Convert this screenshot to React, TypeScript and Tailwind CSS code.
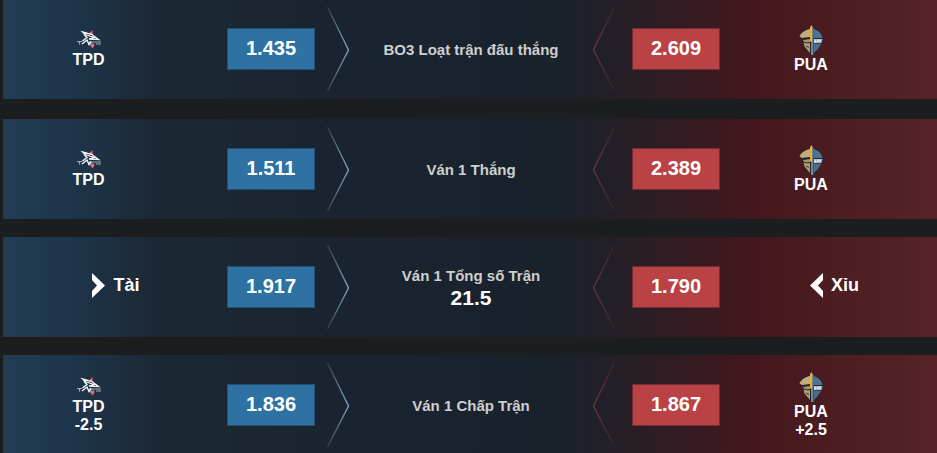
import React from "react";
import clsx from "clsx";

type Side = "home" | "away";

type Market = {
  title: string;
  line?: string;
  overUnder?: boolean;
  home: { label: string; odds: string; handicap?: string };
  away: { label: string; odds: string; handicap?: string };
};

const markets: Market[] = [
  {
    title: "BO3 Loạt trận đấu thắng",
    home: { label: "TPD", odds: "1.435" },
    away: { label: "PUA", odds: "2.609" },
  },
  {
    title: "Ván 1 Thắng",
    home: { label: "TPD", odds: "1.511" },
    away: { label: "PUA", odds: "2.389" },
  },
  {
    title: "Ván 1 Tổng số Trận",
    line: "21.5",
    overUnder: true,
    home: { label: "Tài", odds: "1.917" },
    away: { label: "Xỉu", odds: "1.790" },
  },
  {
    title: "Ván 1 Chấp Trận",
    home: { label: "TPD", odds: "1.836", handicap: "-2.5" },
    away: { label: "PUA", odds: "1.867", handicap: "+2.5" },
  },
];

function TpdLogo() {
  return (
    <svg width="24" height="21" viewBox="0 0 24 21" aria-hidden="true">
      <path d="M11 4.500L15.500 0V6ZM12.500 14.500H18L15.500 18.500Z" fill="#f0666e" />
      <path
        d="M5.500 2L15 4.500L21.500 9.500L12 9L17 7.500L8 4.500Z"
        fill="#1c2b3a"
        stroke="#f4f6f8"
        strokeWidth="1.300"
      />
      <path d="M7 4.500L10 7.500L5.500 11" fill="none" stroke="#f4f6f8" strokeWidth="1.400" />
      <path
        d="M0 11.500H5M2.500 11.500V14.500M12 12H24M13 14H17M19 14H24"
        fill="none"
        stroke="#a3b0bb"
        strokeWidth="1.200"
      />
      <path d="M5 14L10 10L12 14.500L14 11.500" fill="none" stroke="#f4f6f8" strokeWidth="1.400" />
    </svg>
  );
}

function PuaLogo() {
  return (
    <svg width="24" height="31" viewBox="0 0 24 31" aria-hidden="true">
      <path
        d="M11 3.500C6 4 1 8 0 11.500L1 13L3.500 14L4 20L6 23.500L9 26.500L12 30H15L19 24.500L22.500 20L24 12C23 7 19 3.500 13 3.500Z"
        fill="#1d252c"
      />
      {/* Beret and face */}
      <path d="M11 4C6.500 4.500 1.500 8 0.500 11.500L3 13L11 12Z" fill="#c4a97a" />
      <path d="M4 15L11 14V17L8 17.500L4.500 16.500Z" fill="#a8926a" />
      <path d="M4.500 17.500L8.500 18.500L11 18V28L8.500 25L5.500 21.500Z" fill="#b69c70" />
      <path d="M7 21L10 22.500" stroke="#3a3429" strokeWidth="1" />
      {/* Helmet */}
      <path d="M14.500 4C19 5 22.500 8 23.500 13H14.500Z" fill="#50728f" />
      <path d="M15 18.500H22.500L18.500 24.500L15 28Z" fill="#4c6c87" />
      <path d="M15 14H23.500L22.500 18H15Z" fill="#9db1bf" />
      <path d="M16 14.500V17H17.500M19 14.500V17M21 14.500V17" fill="none" stroke="#eef3f6" strokeWidth="1.200" />
      {/* Blade */}
      <path d="M11 2L13 0V18L11 16Z" fill="#f0b022" />
      <path d="M13 1L14.500 3V30H12V18H13Z" fill="#6f8799" />
    </svg>
  );
}

function Pointer({ side }: { side: Side }) {
  return (
    <svg width="13" height="25" viewBox="0 0 13 25" aria-hidden="true">
      <path
        d={side === "home" ? "M0 0L13 12.500L0 25V18L5 12.500L0 7Z" : "M13 0L0 12.500L13 25V18L8 12.500L13 7Z"}
        fill="#fff"
      />
    </svg>
  );
}

function Divider({ side }: { side: Side }) {
  const home = side === "home";
  const color = home ? "#86a9c2" : "#78313a";
  return (
    <svg width="22" height="84" viewBox="0 0 22 84" aria-hidden="true">
      <defs>
        <linearGradient id={`divider-${side}`} x1="0" y1="0" x2="0" y2="1">
          <stop offset="0" stopColor={color} stopOpacity="0.200" />
          <stop offset="0.500" stopColor={color} />
          <stop offset="1" stopColor={color} stopOpacity="0.200" />
        </linearGradient>
      </defs>
      <path
        d={home ? "M0.500 0L21.500 43L0.500 84" : "M21.500 0L0.500 43L21.500 84"}
        fill="none"
        stroke={`url(#divider-${side})`}
        strokeWidth="1.300"
      />
    </svg>
  );
}

function OddsButton({ side, odds, label }: { side: Side; odds: string; label: string }) {
  return (
    <button
      type="button"
      aria-label={`${label} ${odds}`}
      className={clsx(
        "h-[42px] w-[88px] border pb-0.5 text-xl leading-6 font-bold",
        side === "home" ? "border-[#24506f] bg-[#2d72a3]" : "border-[#742c34] bg-[#ba4244]",
      )}
    >
      {odds}
    </button>
  );
}

function Team({ side, label, handicap }: { side: Side; label: string; handicap?: string }) {
  return (
    <div className="flex flex-col items-center text-base leading-[18px] font-bold">
      {side === "home" ? <TpdLogo /> : <PuaLogo />}
      <span>{label}</span>
      {handicap && <span>{handicap}</span>}
    </div>
  );
}

function Total({ side, label }: { side: Side; label: string }) {
  return (
    <div className="flex items-center gap-2 pb-1 text-lg leading-6 font-bold">
      <Pointer side={side} />
      <span>{label}</span>
    </div>
  );
}

function MarketRow({ market }: { market: Market }) {
  const { home, away, overUnder } = market;
  return (
    <section className="grid h-[100px] grid-cols-[224fr_88px_34px_244fr_39px_88px_217fr] items-center bg-[linear-gradient(90deg,#213d53_0%,#1e344a_8%,#1b2833_17%,#1a2430_34%,#19222b_60%,#251f27_66%,#43171d_80%,#4b1d20_88%,#572328_100%)] first:mb-0.5">
      {/* Home side */}
      <div className={clsx("flex justify-center", overUnder ? "pl-0.5" : "pr-[53px]")}>
        {overUnder ? <Total side="home" label={home.label} /> : <Team side="home" {...home} />}
      </div>
      <OddsButton side="home" odds={home.odds} label={home.label} />
      <div className="flex justify-end">
        <Divider side="home" />
      </div>

      {/* Market name */}
      <div className="pt-px text-center font-bold">
        <h2 className="text-[15px] leading-5 text-[#cfcfcf]">{market.title}</h2>
        {market.line && <p className="text-[21px] leading-6">{market.line}</p>}
      </div>

      {/* Away side */}
      <Divider side="away" />
      <OddsButton side="away" odds={away.odds} label={away.label} />
      <div className={clsx("flex justify-center", overUnder ? "pl-3" : "pr-[35px]")}>
        {overUnder ? <Total side="away" label={away.label} /> : <Team side="away" {...away} />}
      </div>
    </section>
  );
}

export default function App() {
  return (
    <div className="min-h-screen overflow-hidden bg-[#1c1d1e] pl-[3px] font-['Liberation_Sans',Arial,sans-serif] text-white">
      <main className="-mt-px flex flex-col gap-[18px]">
        {markets.map((market) => (
          <MarketRow key={market.title} market={market} />
        ))}
      </main>
    </div>
  );
}
